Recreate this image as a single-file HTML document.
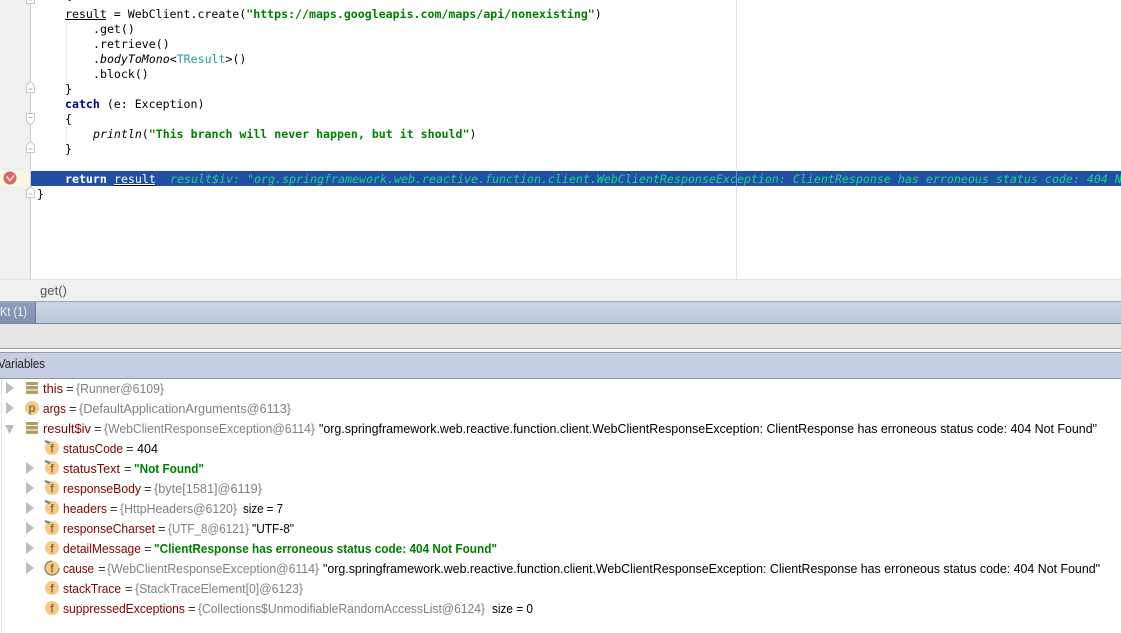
<!DOCTYPE html>
<html><head><meta charset="utf-8">
<style>
html,body{margin:0;padding:0;background:#fff}
svg{display:block}
.m{font-family:"DejaVu Sans Mono","Liberation Mono",monospace;font-size:11.58px;fill:#000}
.k{font-weight:bold;fill:#000080}
.s{font-weight:bold;fill:#008000}
.i{font-style:italic}
.v{font-family:"Liberation Sans",sans-serif;font-size:13px}
.n{fill:#800000}.e{fill:#333}.g{fill:#808080}.b{fill:#000}.t{fill:#008000;font-weight:bold}
</style></head><body>
<svg width="1121" height="633" viewBox="0 0 1121 633" xmlns="http://www.w3.org/2000/svg">
<defs>
<linearGradient id="tb" x1="0" y1="0" x2="0" y2="1"><stop offset="0" stop-color="#cbd5e4"/><stop offset="1" stop-color="#bbc7da"/></linearGradient>
<linearGradient id="kt" x1="0" y1="0" x2="0" y2="1"><stop offset="0" stop-color="#8e9dbb"/><stop offset="1" stop-color="#7f8fae"/></linearGradient>
<g id="bars"><rect x="26" y="-6" width="12" height="3" fill="#b39a62"/><rect x="26" y="-2" width="12" height="3.4" fill="#b39a62"/><rect x="26" y="2.5" width="12" height="3.4" fill="#b39a62"/></g>
<g id="r"><path d="M6-6L14 0 6 6Z" fill="#bdbdbd"/></g>
<g id="f"><circle cx="52" cy="0" r="7" fill="#f5ca85"/><text x="52" y="4.500" text-anchor="middle" font-family="Liberation Sans,sans-serif" font-size="12" fill="#5f4e2c">f</text></g>
<g id="fp"><use href="#f"/><path d="M45-7L50-5" stroke="#7b8792" stroke-width="2.400"/></g>
<g id="fold"><path d="M26.500-3.500L30.500-7.500 34.500-3.500V3.500H26.500Z" fill="#fff" stroke="#c8c8c8"/><path d="M28.500 0H32.500" stroke="#b0b0b0"/></g>
<g id="foldE"><path d="M26.500-5.500H34.500V2L30.500 6 26.500 2Z" fill="#fff" stroke="#c8c8c8"/><path d="M28.500-1.500H32.500" stroke="#b0b0b0"/></g>
</defs>

<rect width="1121" height="633" fill="#fff"/>
<rect x="0" y="0" width="30" height="279" fill="#f0f0f0"/>
<rect x="30" y="0" width="1" height="279" fill="#cfcfcf"/>
<rect x="736" y="0" width="1" height="279" fill="#e3e3e3"/>
<rect x="66" y="21" width="1" height="66" fill="#ececec"/>
<rect x="66" y="127" width="1" height="16" fill="#ececec"/>
<rect x="0" y="171" width="30" height="15" fill="#fdf6e3"/>
<rect x="31" y="171" width="1090" height="15" fill="#214fa6"/>

<use href="#fold" y="0"/>
<use href="#fold" y="89"/>
<use href="#foldE" y="119"/>
<use href="#fold" y="149"/>
<use href="#fold" y="194"/>

<circle cx="10" cy="178" r="6.500" fill="#d8686a"/>
<path d="M6.500 176.500L10 180.500 14 175.500" fill="none" stroke="#f6d8d2" stroke-width="1.600"/>

<g class="m">
<text x="65" y="-1">{</text>
<text x="65" y="18">result = WebClient.create(<tspan class="s">"https://maps.googleapis.com/maps/api/nonexisting"</tspan>)</text>
<text x="93" y="33">.get()</text>
<text x="93" y="48">.retrieve()</text>
<text x="93" y="63">.<tspan class="i">bodyToMono</tspan>&lt;<tspan fill="#20999d">TResult</tspan>&gt;()</text>
<text x="93" y="78">.block()</text>
<text x="65" y="93">}</text>
<text x="65" y="108"><tspan class="k">catch</tspan> (e: Exception)</text>
<text x="65" y="123">{</text>
<text x="93" y="138"><tspan class="i">println</tspan>(<tspan class="s">"This branch will never happen, but it should"</tspan>)</text>
<text x="65" y="153">}</text>
<text x="65" y="183" style="font-weight:bold;fill:#fff">return</text>
<text x="114" y="183" style="fill:#fff">result</text>
<text x="170" y="183" class="i" style="fill:#1ad67f;font-size:11.63px">result$iv: "org.springframework.web.reactive.function.client.WebClientResponseException: ClientResponse has erroneous status code: 404 Not Found"</text>
<text x="37" y="198">}</text>
</g>
<rect x="736" y="171" width="1" height="15" fill="#8ea6d8" opacity="0.7"/>
<rect x="65" y="19" width="41" height="1" fill="#000"/>
<rect x="114" y="184" width="41" height="1" fill="#fff"/>
<rect x="114" y="185" width="41" height="1" fill="#000"/>

<rect x="0" y="279" width="1121" height="22" fill="#f0f0f0"/>
<rect x="0" y="279" width="1121" height="1" fill="#e2e2e2"/>
<text x="40" y="295" class="v" fill="#555" textLength="27" lengthAdjust="spacingAndGlyphs">get()</text>

<rect x="0" y="301" width="1121" height="1" fill="#a0a9b6"/>
<rect x="0" y="302" width="1121" height="21" fill="url(#tb)"/>
<rect x="0" y="323" width="1121" height="1" fill="#7f8792"/>
<rect x="0" y="302" width="35" height="21" fill="url(#kt)"/>
<rect x="35" y="302" width="1" height="21" fill="#6d7a94"/>
<text x="0" y="316" class="v" fill="#eef2f8" textLength="27" lengthAdjust="spacingAndGlyphs">Kt (1)</text>

<rect x="0" y="324" width="1121" height="24" fill="#e6e6e6"/>
<rect x="0" y="348" width="1121" height="1" fill="#9a9ea4"/>
<rect x="0" y="349" width="1121" height="3" fill="#f6f6f6"/>
<rect x="0" y="352" width="1121" height="1" fill="#9a9ea4"/>
<rect x="0" y="353" width="1121" height="25" fill="#c5cfe1"/>
<rect x="0" y="378" width="1121" height="1" fill="#8f96a1"/>
<text x="-2" y="368" class="v" fill="#222" textLength="47" lengthAdjust="spacingAndGlyphs">Variables</text>
<rect x="1" y="379" width="1" height="254" fill="#e2e2e2"/>

<use href="#r" y="388"/><use href="#bars" y="388"/>
<use href="#r" y="408"/><circle cx="32" cy="408" r="7" fill="#f5ca85"/><text x="32" y="412" text-anchor="middle" class="v" style="font-size:12px" fill="#5f4e2c">p</text>
<path d="M5 425L14 425 9.500 434Z" fill="#bdbdbd"/><use href="#bars" y="428"/>
<use href="#fp" y="448"/>
<use href="#r" x="20" y="468"/><use href="#fp" y="468"/>
<use href="#r" x="20" y="488"/><use href="#fp" y="488"/>
<use href="#r" x="20" y="508"/><use href="#fp" y="508"/>
<use href="#r" x="20" y="528"/><use href="#fp" y="528"/>
<use href="#r" x="20" y="548"/><use href="#f" y="548"/>
<use href="#r" x="20" y="568"/><use href="#f" y="568"/><path d="M52 561a7 7 0 1 0 7 7" fill="none" stroke="#8a7a5a" stroke-width="1.200"/>
<use href="#f" y="588"/>
<use href="#f" y="608"/>

<g class="v">
<text class="n" x="43" y="393" textLength="20" lengthAdjust="spacingAndGlyphs">this</text><text class="e" x="66" y="393">=</text><text class="g" x="76" y="393" textLength="88" lengthAdjust="spacingAndGlyphs">{Runner@6109}</text>
<text class="n" x="43" y="413" textLength="23" lengthAdjust="spacingAndGlyphs">args</text><text class="e" x="69" y="413">=</text><text class="g" x="79" y="413" textLength="212" lengthAdjust="spacingAndGlyphs">{DefaultApplicationArguments@6113}</text>
<text class="n" x="43" y="433" textLength="48" lengthAdjust="spacingAndGlyphs">result$iv</text><text class="e" x="94" y="433">=</text><text class="g" x="104" y="433" textLength="211" lengthAdjust="spacingAndGlyphs">{WebClientResponseException@6114}</text><text class="b" x="319" y="433" textLength="778" lengthAdjust="spacingAndGlyphs">"org.springframework.web.reactive.function.client.WebClientResponseException: ClientResponse has erroneous status code: 404 Not Found"</text>
<text class="n" x="63" y="453" textLength="60" lengthAdjust="spacingAndGlyphs">statusCode</text><text class="e" x="126" y="453">=</text><text class="b" x="137" y="453" textLength="21" lengthAdjust="spacingAndGlyphs">404</text>
<text class="n" x="63" y="473" textLength="57" lengthAdjust="spacingAndGlyphs">statusText</text><text class="e" x="124" y="473">=</text><text class="t" x="134" y="473" textLength="70" lengthAdjust="spacingAndGlyphs">"Not Found"</text>
<text class="n" x="63" y="493" textLength="78" lengthAdjust="spacingAndGlyphs">responseBody</text><text class="e" x="144" y="493">=</text><text class="g" x="154" y="493" textLength="108" lengthAdjust="spacingAndGlyphs">{byte[1581]@6119}</text>
<text class="n" x="63" y="513" textLength="44" lengthAdjust="spacingAndGlyphs">headers</text><text class="e" x="110" y="513">=</text><text class="g" x="120" y="513" textLength="117" lengthAdjust="spacingAndGlyphs">{HttpHeaders@6120}</text><text class="b" x="243" y="513" textLength="40" lengthAdjust="spacingAndGlyphs">size = 7</text>
<text class="n" x="63" y="533" textLength="92" lengthAdjust="spacingAndGlyphs">responseCharset</text><text class="e" x="158" y="533">=</text><text class="g" x="168" y="533" textLength="81" lengthAdjust="spacingAndGlyphs">{UTF_8@6121}</text><text class="b" x="252" y="533" textLength="42" lengthAdjust="spacingAndGlyphs">"UTF-8"</text>
<text class="n" x="63" y="553" textLength="78" lengthAdjust="spacingAndGlyphs">detailMessage</text><text class="e" x="144" y="553">=</text><text class="t" x="154" y="553" textLength="343" lengthAdjust="spacingAndGlyphs">"ClientResponse has erroneous status code: 404 Not Found"</text>
<text class="n" x="63" y="573" textLength="31" lengthAdjust="spacingAndGlyphs">cause</text><text class="e" x="98" y="573">=</text><text class="g" x="107" y="573" textLength="212" lengthAdjust="spacingAndGlyphs">{WebClientResponseException@6114}</text><text class="b" x="323" y="573" textLength="777" lengthAdjust="spacingAndGlyphs">"org.springframework.web.reactive.function.client.WebClientResponseException: ClientResponse has erroneous status code: 404 Not Found"</text>
<text class="n" x="63" y="593" textLength="58" lengthAdjust="spacingAndGlyphs">stackTrace</text><text class="e" x="125" y="593">=</text><text class="g" x="135" y="593" textLength="168" lengthAdjust="spacingAndGlyphs">{StackTraceElement[0]@6123}</text>
<text class="n" x="63" y="613" textLength="122" lengthAdjust="spacingAndGlyphs">suppressedExceptions</text><text class="e" x="188" y="613">=</text><text class="g" x="198" y="613" textLength="287" lengthAdjust="spacingAndGlyphs">{Collections$UnmodifiableRandomAccessList@6124}</text><text class="b" x="492" y="613" textLength="41" lengthAdjust="spacingAndGlyphs">size = 0</text>
</g>
</svg>
</body></html>
